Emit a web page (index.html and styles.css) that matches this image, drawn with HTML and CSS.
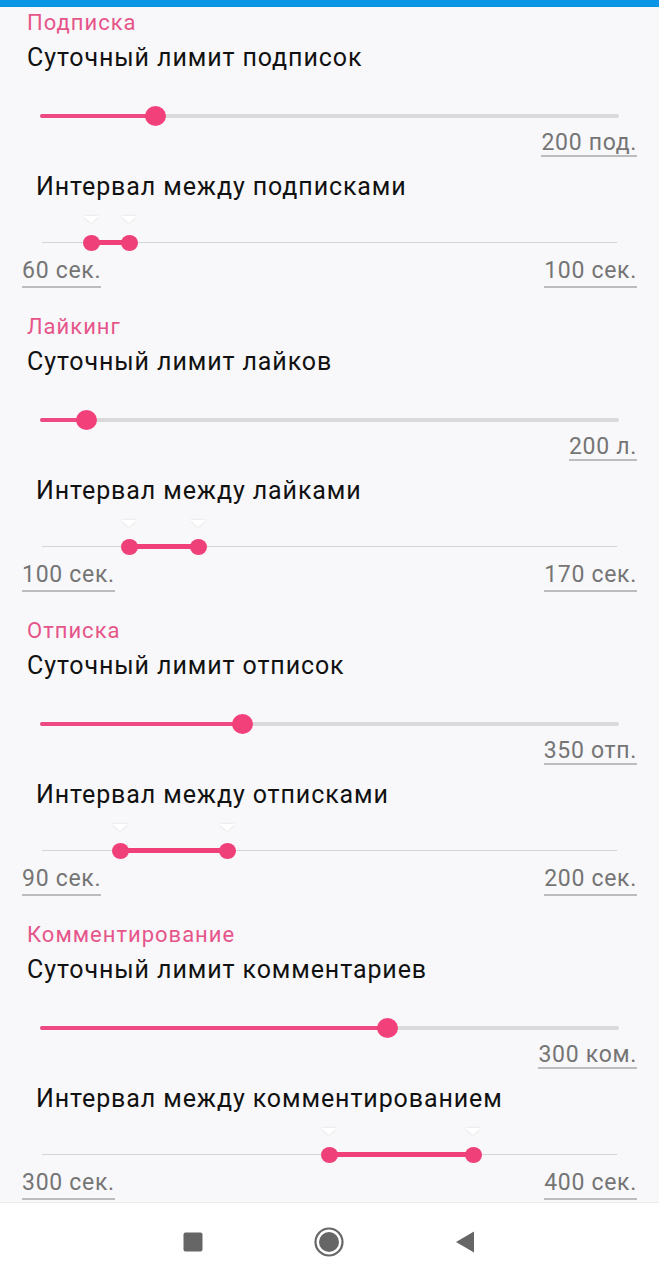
FILE: index.html
```html
<!DOCTYPE html>
<html lang="ru">
<head>
  <meta charset="UTF-8">
  <meta name="viewport" content="width=device-width, initial-scale=1.0">
  <title>Лимиты</title>
  <link rel="stylesheet" href="styles.css">
</head>
<body>
  <div class="screen">
    <div class="status-bar"></div>

    <div class="content">
      <!-- Подписка -->
      <div class="section">
        <div class="section-title">Подписка</div>
        <div class="item-title">Суточный лимит подписок</div>
        <div class="slider">
          <div class="track"></div>
          <div class="track-fill" style="width: 19.9%"></div>
          <div class="thumb" style="left: 19.9%"></div>
        </div>
        <div class="value-row end">
          <span class="value">200 под.</span>
        </div>
        <div class="item-title sub">Интервал между подписками</div>
        <div class="range">
          <div class="range-track"></div>
          <div class="range-fill" style="left: 8.5%; width: 6.6%"></div>
          <div class="range-thumb" style="left: 8.5%"></div>
          <div class="range-thumb" style="left: 15.1%"></div>
        </div>
        <div class="value-row">
          <span class="value low">60 сек.</span>
          <span class="value low">100 сек.</span>
        </div>
      </div>

      <!-- Лайкинг -->
      <div class="section">
        <div class="section-title">Лайкинг</div>
        <div class="item-title">Суточный лимит лайков</div>
        <div class="slider">
          <div class="track"></div>
          <div class="track-fill" style="width: 7.9%"></div>
          <div class="thumb" style="left: 7.9%"></div>
        </div>
        <div class="value-row end">
          <span class="value">200 л.</span>
        </div>
        <div class="item-title sub">Интервал между лайками</div>
        <div class="range">
          <div class="range-track"></div>
          <div class="range-fill" style="left: 15.1%; width: 12%"></div>
          <div class="range-thumb" style="left: 15.1%"></div>
          <div class="range-thumb" style="left: 27.1%"></div>
        </div>
        <div class="value-row">
          <span class="value low">100 сек.</span>
          <span class="value low">170 сек.</span>
        </div>
      </div>

      <!-- Отписка -->
      <div class="section">
        <div class="section-title">Отписка</div>
        <div class="item-title">Суточный лимит отписок</div>
        <div class="slider">
          <div class="track"></div>
          <div class="track-fill" style="width: 34.9%"></div>
          <div class="thumb" style="left: 34.9%"></div>
        </div>
        <div class="value-row end">
          <span class="value">350 отп.</span>
        </div>
        <div class="item-title sub">Интервал между отписками</div>
        <div class="range">
          <div class="range-track"></div>
          <div class="range-fill" style="left: 13.6%; width: 18.6%"></div>
          <div class="range-thumb" style="left: 13.6%"></div>
          <div class="range-thumb" style="left: 32.2%"></div>
        </div>
        <div class="value-row">
          <span class="value low">90 сек.</span>
          <span class="value low">200 сек.</span>
        </div>
      </div>

      <!-- Комментирование -->
      <div class="section">
        <div class="section-title">Комментирование</div>
        <div class="item-title">Суточный лимит комментариев</div>
        <div class="slider">
          <div class="track"></div>
          <div class="track-fill" style="width: 59.9%"></div>
          <div class="thumb" style="left: 59.9%"></div>
        </div>
        <div class="value-row end">
          <span class="value">300 ком.</span>
        </div>
        <div class="item-title sub">Интервал между комментированием</div>
        <div class="range">
          <div class="range-track"></div>
          <div class="range-fill" style="left: 49.9%; width: 25.1%"></div>
          <div class="range-thumb" style="left: 49.9%"></div>
          <div class="range-thumb" style="left: 75%"></div>
        </div>
        <div class="value-row">
          <span class="value low">300 сек.</span>
          <span class="value low">400 сек.</span>
        </div>
      </div>
    </div>

    <div class="nav-bar">
      <svg class="nav-icon" width="40" height="40" viewBox="0 0 40 40">
        <rect x="10.5" y="10.5" width="19" height="19" rx="2" fill="#666"/>
      </svg>
      <svg class="nav-icon" width="40" height="40" viewBox="0 0 40 40">
        <circle cx="20" cy="20" r="13.5" fill="none" stroke="#666" stroke-width="2.2"/>
        <circle cx="20" cy="20" r="10" fill="#666"/>
      </svg>
      <svg class="nav-icon" width="40" height="40" viewBox="0 0 40 40">
        <path d="M11 20 L29 9.5 L29 30.5 Z" fill="#666"/>
      </svg>
    </div>
  </div>
</body>
</html>
```

FILE: styles.css
```css
body {
  margin: 0;
  font-family: Roboto, "Noto Sans", sans-serif;
  background-color: #f8f8fa;
}
.screen {
  width: 659px;
  height: 1280px;
  display: flex;
  flex-direction: column;
  overflow: hidden;
}
.status-bar {
  height: 7px;
  background-color: #0a96e4;
  flex-shrink: 0;
}
.content {
  flex: 1;
  overflow: hidden;
  padding-top: 4px;
}
.section {
  margin-bottom: 27px;
}
.section-title {
  height: 24px;
  line-height: 24px;
  font-size: 22px;
  letter-spacing: 1px;
  color: #e6558a;
  padding-left: 27px;
}
.item-title {
  height: 30px;
  line-height: 30px;
  font-size: 25px;
  letter-spacing: 0.9px;
  color: #111;
  margin-top: 8px;
  padding-left: 27px;
  white-space: nowrap;
}
.item-title.sub {
  margin-top: 15px;
  padding-left: 36px;
}
.slider {
  position: relative;
  height: 28px;
  margin: 29px 40px 0 40px;
}
.track {
  position: absolute;
  left: 0;
  right: 0;
  top: 12px;
  height: 4px;
  background-color: #d9d9d9;
  border-radius: 2px;
}
.track-fill {
  position: absolute;
  left: 0;
  top: 12px;
  height: 4px;
  background-color: #ec4a80;
  border-radius: 2px;
}
.thumb {
  position: absolute;
  top: 4px;
  width: 21px;
  height: 20px;
  margin-left: -10px;
  border-radius: 50%;
  background-color: #f2407a;
}
.value-row {
  display: flex;
  justify-content: space-between;
  align-items: flex-start;
  margin-top: 2px;
  padding: 0 22px;
}
.value-row.end {
  justify-content: flex-end;
}
.value {
  font-size: 23px;
  line-height: 22px;
  letter-spacing: 0.7px;
  color: #757575;
  padding-bottom: 1px;
  border-bottom: 2px solid #bdbdbd;
}
.value.low {
  padding-bottom: 4px;
}
.value-row:has(.low) {
  margin-top: 3px;
}
.range {
  position: relative;
  height: 28px;
  margin: 27px 42px 0 42px;
}
.range-track {
  position: absolute;
  left: 0;
  right: 0;
  top: 13px;
  height: 1px;
  background-color: #d4d4d4;
}
.range-fill {
  position: absolute;
  top: 11px;
  height: 5px;
  background-color: #f0407a;
}
.range-thumb {
  position: absolute;
  top: 6px;
  width: 17px;
  height: 16px;
  margin-left: -8px;
  border-radius: 50%;
  background-color: #f0407a;
}
.range-thumb::before {
  content: "";
  position: absolute;
  left: 0;
  top: -19px;
  border-left: 8px solid transparent;
  border-right: 8px solid transparent;
  border-top: 7px solid #ffffff;
  filter: drop-shadow(0 0 1px rgba(0, 0, 0, 0.12));
}
.nav-bar {
  height: 77px;
  flex-shrink: 0;
  background-color: #ffffff;
  border-top: 1px solid #ececec;
  display: flex;
  align-items: center;
  padding-left: 173px;
  gap: 96px;
}
.nav-icon {
  display: block;
}
```
